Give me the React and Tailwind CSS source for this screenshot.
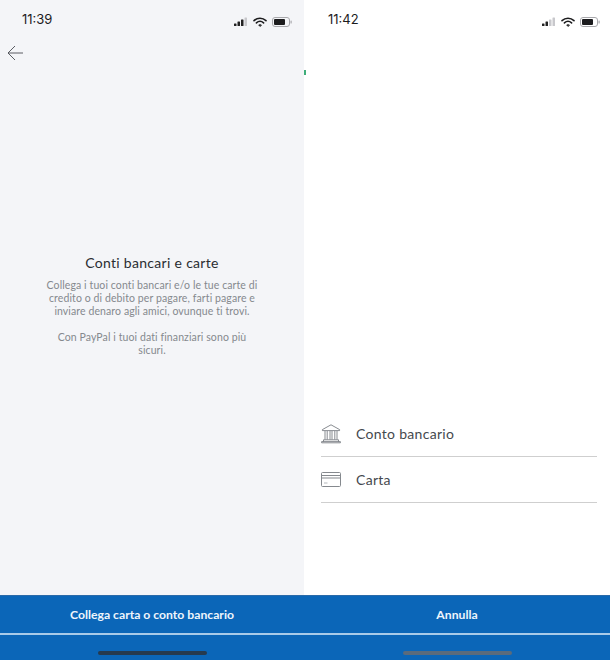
import React from 'react';

const font = { fontFamily: 'Lato, "Noto Sans", sans-serif' };

const StatusBar = ({ time, bars, className }) => (
  <div className={`flex h-[38px] items-end justify-between pb-[11px] ${className}`}>
    <span className="text-[13px] leading-4 text-[#1c1c1e]" style={{ fontFamily: 'Inter, sans-serif' }}>{time}</span>
    <div className="flex items-center gap-[5px]">
      <svg width="14" height="10" viewBox="0 0 14 10">
        {[0, 1, 2, 3].map((i) => (
          <rect key={i} x={i * 3.5} y={6.5 - i * 2} width="2.5" height={2.5 + i * 2} rx="0.5" fill={i < bars ? '#222' : '#c8c8cc'} />
        ))}
      </svg>
      <svg width="14" height="10" viewBox="0 0 14 10" fill="none" stroke="#1c1c1e" strokeLinecap="round">
        <path d="M1 3.6C4.4 .4 9.6 .4 13 3.6" strokeWidth="1.6" />
        <path d="M3.4 5.9C5.5 4 8.5 4 10.6 5.9" strokeWidth="1.6" />
        <path d="M7 9.4 5.6 8C6.4 7.3 7.6 7.3 8.4 8Z" fill="#1c1c1e" strokeWidth="0.6" />
      </svg>
      <svg width="20" height="10" viewBox="0 0 20 10">
        <rect x="0.5" y="0.5" width="17" height="9" rx="2.5" fill="none" stroke="#a8a8ac" />
        <rect x="2" y="2" width="11" height="6" rx="1" fill="#1c1c1e" />
        <rect x="18.5" y="3.5" width="1.2" height="3" rx="0.6" fill="#a8a8ac" />
      </svg>
    </div>
  </div>
);

const BottomBar = ({ label, handleColor }) => (
  <div className="flex h-[65px] flex-col bg-[#0b66b8]">
    <div className="flex h-[38px] items-center justify-center border-t border-[#2a6aa8] pt-[2px] text-[12.2px] font-bold text-[#eef5fc]">
      {label}
    </div>
    <div className="h-[2px] bg-[#a9cbe9]" />
    <div className="flex flex-1 justify-center pt-[16px]">
      <div className={`h-[4px] w-[109px] rounded-full ${handleColor}`} />
    </div>
  </div>
);

const BankIcon = () => (
  <svg width="20" height="20" viewBox="0 0 20 20" fill="none" stroke="#6a6f75" strokeWidth="0.8">
    <path d="M10 .8 18.6 5.6V6.6H1.4V5.6Z" />
    <path d="M4 7V15.5M6.2 7V15.5M9 7V15.5M11 7V15.5M13.8 7V15.5M16 7V15.5" strokeWidth="0.8" />
    <path d="M2.5 15.8H17.5M2.5 15.8V17.5M17.5 15.8V17.5M.6 18.8H19.4V17.6H.6Z" />
  </svg>
);

const CardIcon = () => (
  <svg width="20" height="15" viewBox="0 0 20 15" fill="none" stroke="#85898e" strokeWidth="1">
    <rect x="0.5" y="0.5" width="19" height="14" rx="1" />
    <path d="M.5 3.5H19.5M.5 6H19.5" />
    <path d="M3 11H6.5" stroke="#b5b8bc" />
  </svg>
);

const Row = ({ icon, label, rowClass }) => (
  <div className={`flex items-center border-b border-[#cfcfcf] ${rowClass}`}>
    <div className="flex w-[35px] justify-start">{icon}</div>
    <span className="pb-[1px] text-[14px] tracking-[0.3px] text-[#45494e]">{label}</span>
  </div>
);

export default function App() {
  return (
    <div className="relative flex h-[660px] w-[610px] overflow-hidden" style={font}>
      <div className="flex w-[304px] flex-col bg-[#f4f5f8]">
        <StatusBar time="11:39" bars={3} className="pl-[22px] pr-[12px]" />
        <div className="pl-[7px] pt-[7px]">
          <svg width="17" height="16" viewBox="0 0 17 16" fill="none" stroke="#4a4d52" strokeWidth="0.9">
            <path d="M16 8H1M8 1 1 8 8 15" />
          </svg>
        </div>
        <div className="flex flex-1 flex-col items-center pt-[192px] text-center">
          <h1 className="text-[14px] leading-5 tracking-[0.3px] text-[#2a2d31]">Conti bancari e carte</h1>
          <p className="mt-[6px] w-[230px] text-[10.5px] leading-[13px] tracking-[0.1px] text-[#85898e]">
            Collega i tuoi conti bancari e/o le tue carte di credito o di debito per pagare, farti pagare e inviare denaro agli amici, ovunque ti trovi.
          </p>
          <p className="mt-[13px] w-[200px] text-[10.5px] leading-[13px] tracking-[0.1px] text-[#85898e]">
            Con PayPal i tuoi dati finanziari sono più sicuri.
          </p>
        </div>
        <BottomBar label="Collega carta o conto bancario" handleColor="bg-[#263a4e]" />
      </div>

      <div className="flex w-[306px] flex-col bg-white">
        <StatusBar time="11:42" bars={2} className="pl-[24px] pr-[10px]" />
        <div className="flex flex-1 flex-col justify-end pb-[92px] pl-[17px] pr-[13px]">
          <Row icon={<BankIcon />} label="Conto bancario" rowClass="h-[46px]" />
          <Row icon={<CardIcon />} label="Carta" rowClass="h-[46px]" />
        </div>
        <BottomBar label="Annulla" handleColor="bg-[#5a6b7c]" />
      </div>

      <div className="absolute left-[304px] top-[70px] h-[5px] w-[2px] bg-[#3fae7a]" />
    </div>
  );
}
